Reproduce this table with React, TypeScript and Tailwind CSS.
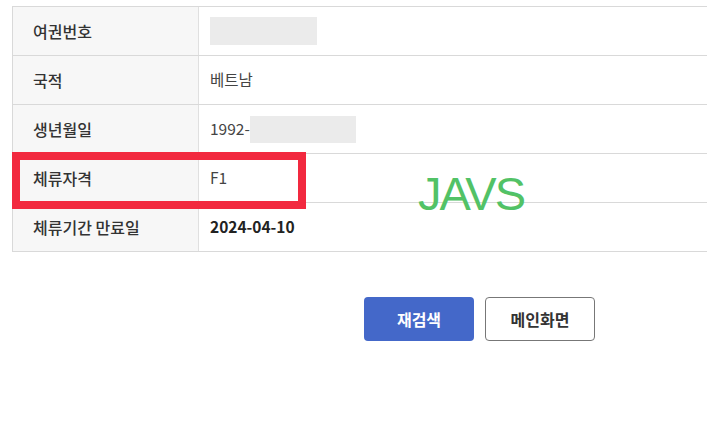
import React from 'react';

type Row = { label: string; value: React.ReactNode };

const rows: Row[] = [
  { label: '여권번호', value: <span className="block w-[107px] h-[28px] bg-[#ebebeb]" /> },
  { label: '국적', value: '베트남' },
  {
    label: '생년월일',
    value: (
      <span className="flex items-center">
        1992-
        <span className="block w-[106px] h-[27px] bg-[#ebebeb]" />
      </span>
    ),
  },
  { label: '체류자격', value: 'F1' },
  { label: '체류기간 만료일', value: <span className="font-bold text-[#222]">2024-04-10</span> },
];

export default function App() {
  return (
    <div
      className="relative w-[707px] h-[425px] overflow-hidden bg-white text-[15px] text-[#333]"
      style={{ fontFamily: '"Noto Sans CJK KR", "Noto Sans", sans-serif' }}
    >
      <div className="pt-[6px] pl-[12px]">
        <div className="border-t border-l border-[#d9d9d9]">
          {rows.map((row) => (
            <div key={row.label} className="flex h-[49px] border-b border-[#d9d9d9]">
              <div className="w-[186px] shrink-0 bg-[#f7f7f7] border-r border-[#e0e0e0] pl-[20px] flex items-center font-medium text-[16px] text-[#333]">
                {row.label}
              </div>
              <div className="flex-1 pl-[11px] flex items-center text-[15.5px] text-[#444]">{row.value}</div>
            </div>
          ))}
        </div>
      </div>

      <div className="flex gap-[11px] pl-[364px] pt-[45px]">
        <button className="w-[110px] h-[44px] rounded-[4px] bg-[#4468c9] text-white font-bold text-[16px]">
          재검색
        </button>
        <button className="w-[110px] h-[44px] rounded-[4px] border border-[#777] bg-white text-[#333] font-bold text-[16px]">
          메인화면
        </button>
      </div>

      {/* highlight box */}
      <div className="absolute left-[12px] top-[152px] w-[294px] h-[57px] border-[8px] border-[#f2293f]" />

      {/* watermark */}
      <div
        className="absolute left-[418px] top-[166px] text-[47px] leading-[56px] text-[#52c266] tracking-[-2px]"
        style={{ fontFamily: '"Liberation Sans", Arial, sans-serif' }}
      >
        JAVS
      </div>
    </div>
  );
}
